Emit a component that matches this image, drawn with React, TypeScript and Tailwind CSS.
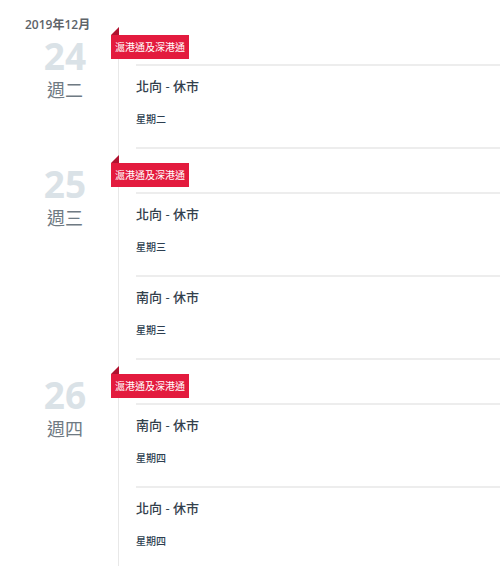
import React from "react";

type Item = { title: string; sub: string };
type Group = { day: string; week: string; items: Item[] };

const groups: Group[] = [
  { day: "24", week: "週二", items: [{ title: "北向 - 休市", sub: "星期二" }] },
  {
    day: "25",
    week: "週三",
    items: [
      { title: "北向 - 休市", sub: "星期三" },
      { title: "南向 - 休市", sub: "星期三" },
    ],
  },
  {
    day: "26",
    week: "週四",
    items: [
      { title: "南向 - 休市", sub: "星期四" },
      { title: "北向 - 休市", sub: "星期四" },
    ],
  },
];

const font = { fontFamily: '"Open Sans", "Noto Sans CJK TC", sans-serif' };

export default function App() {
  return (
    <div className="w-[500px] h-[566px] overflow-hidden bg-white pt-[17px]" style={font}>
      <div className="h-[10px] pl-[25px] text-[12px] leading-[16px] font-semibold text-[#5d6368]">
        2019年12月
      </div>
      {groups.map((g, gi) => (
        <div key={gi} className="flex">
          <div className="w-[118px] shrink-0 pl-[12px] text-center">
            <div className="mt-[11px] text-[37px] leading-[36px] font-bold text-[#dae2e7]">{g.day}</div>
            <div className="mt-[4px] text-[18px] leading-[24px] text-[#6f7a83]">{g.week}</div>
          </div>
          <div className="flex-1 border-l border-[#e8e8e8] pb-[6px]">
            <svg width="8" height="8" viewBox="0 0 8 8" className="block ml-[-8px]">
              <polygon points="0,8 8,8 8,0" fill="#b0122f" />
            </svg>
            <div className="ml-[-8px] flex w-fit h-[24px] items-center bg-[#e31b3e] px-[4px] text-[10px] leading-[14px] text-white">
              滬港通及深港通
            </div>
            <div className="mt-[5px] ml-[17px] border-b-2 border-[#ededed]">
              {g.items.map((it, ii) => (
                <div key={ii} className="h-[83px] border-t-2 border-[#ededed] pt-[11px]">
                  <div className="text-[13px] leading-[18px] font-medium text-[#33404c]">{it.title}</div>
                  <div className="mt-[17px] text-[10px] leading-[14px] font-medium text-[#2c3e50]">{it.sub}</div>
                </div>
              ))}
            </div>
          </div>
        </div>
      ))}
    </div>
  );
}
